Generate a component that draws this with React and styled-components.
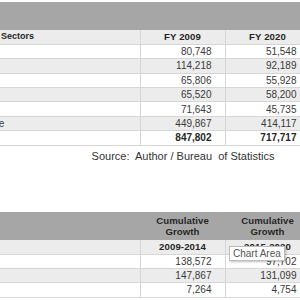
import React from 'react'
import styled, { createGlobalStyle } from 'styled-components'

const GlobalStyle = createGlobalStyle`
  html, body {
    margin: 0;
    padding: 0;
    background: #fff;
  }
  body {
    width: 300px;
    height: 300px;
    overflow: hidden;
    font-family: "Liberation Sans", Arial, sans-serif;
    color: #333;
  }
`

const Page = styled.div`
  position: relative;
  width: 300px;
  height: 300px;
  overflow: hidden;
  padding-top: 2px;
  box-sizing: border-box;
`

const Table = styled.table`
  border-collapse: collapse;
  table-layout: fixed;
  margin-left: -48.5px;
  width: 358.5px;
  font-size: 10px;
  color: #3a3a3a;
`

const HeadRow = styled.tr`
  background: #a6a6a6;
  height: 28px;
`

const HeadCell = styled.th`
  padding: 0;
  font-weight: bold;
  font-size: 9.6px;
  line-height: 11px;
  letter-spacing: 0.1px;
  text-align: center;
  color: #262626;
  vertical-align: middle;
`

const Row = styled.tr`
  height: 14.4px;
  background: ${p => (p.$shade ? '#ececec' : '#fff')};
  border-bottom: 1px solid #d6d6d6;
`

const Label = styled.td`
  padding: 0 0 0 4px;
  white-space: nowrap;
  overflow: hidden;
  font-size: ${p => (p.$bold ? '9px' : '10px')};
  font-weight: ${p => (p.$bold ? 'bold' : 'normal')};
  color: ${p => (p.$bold ? '#262626' : 'inherit')};
  border-right: 1px solid #d6d6d6;
  line-height: 13px;
`

const Num = styled.td`
  padding: ${p => (p.$center ? '0' : '0 13px 0 0')};
  text-align: ${p => (p.$center ? 'center' : 'right')};
  font-weight: ${p => (p.$bold ? 'bold' : 'normal')};
  font-size: ${p => (p.$center ? '9.6px' : '10px')};
  letter-spacing: ${p => (p.$center ? '0.1px' : '0')};
  color: ${p => (p.$bold ? '#262626' : 'inherit')};
  border-right: 1px solid #d6d6d6;
  line-height: 13px;
`

const Source = styled.div`
  font-size: 11px;
  text-align: center;
  margin: 4px 0 0 66px;
  width: 234px;
  color: #333;
  white-space: pre;
`

const Spacer = styled.div`
  height: 50px;
`

const Tooltip = styled.div`
  position: absolute;
  left: 229px;
  top: 246px;
  padding: 1px 3px;
  background: #fff;
  border: 1px solid #bdbdbd;
  box-shadow: 1px 1px 2px rgba(0, 0, 0, 0.25);
  font-size: 10px;
  line-height: 11px;
  color: #555;
`

const sectors = [
  ['Farming', '80,748', '51,548'],
  ['Mining', '114,218', '92,189'],
  ['Industry', '65,806', '55,928'],
  ['Transport', '65,520', '58,200'],
  ['Utilities', '71,643', '45,735'],
  ['Commerce', '449,867', '414,117'],
]

const growth = [
  ['Farming', '138,572', '97,702'],
  ['Mining', '147,867', '131,099'],
  ['Industry', '7,264', '4,754'],
]

const Cols = () => (
  <colgroup>
    <col style={{ width: 188.5 }} />
    <col style={{ width: 85 }} />
    <col style={{ width: 85 }} />
  </colgroup>
)

export default function App() {
  return (
    <>
      <GlobalStyle />
      <Page>
        <Table>
          <Cols />
          <tbody>
            <HeadRow>
              <HeadCell />
              <HeadCell />
              <HeadCell />
            </HeadRow>
            <Row $shade>
              <Label $bold>Economic Sectors</Label>
              <Num $center $bold>FY 2009</Num>
              <Num $center $bold>FY 2020</Num>
            </Row>
            {sectors.map((r, i) => (
              <Row key={r[0]} $shade={i % 2 === 1}>
                <Label>{r[0]}</Label>
                <Num>{r[1]}</Num>
                <Num>{r[2]}</Num>
              </Row>
            ))}
            <Row>
              <Label $bold>Total</Label>
              <Num $bold>847,802</Num>
              <Num $bold>717,717</Num>
            </Row>
          </tbody>
        </Table>
        <Source>{'Source:  Author / Bureau  of Statistics'}</Source>
        <Spacer />
        <Table>
          <Cols />
          <tbody>
            <HeadRow>
              <HeadCell />
              <HeadCell>Cumulative<br />Growth</HeadCell>
              <HeadCell>Cumulative<br />Growth</HeadCell>
            </HeadRow>
            <Row $shade>
              <Label $bold>Period</Label>
              <Num $center $bold>2009-2014</Num>
              <Num $center $bold>2015-2020</Num>
            </Row>
            {growth.map((r, i) => (
              <Row key={r[0]} $shade={i % 2 === 1}>
                <Label>{r[0]}</Label>
                <Num>{r[1]}</Num>
                <Num>{r[2]}</Num>
              </Row>
            ))}
          </tbody>
        </Table>
        <Tooltip>Chart Area</Tooltip>
      </Page>
    </>
  )
}
